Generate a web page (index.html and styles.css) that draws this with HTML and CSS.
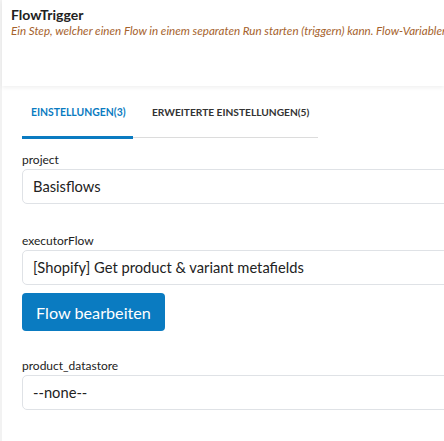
FILE: index.html
```html
<!DOCTYPE html>
<html lang="de">
<head>
<meta charset="utf-8">
<title>FlowTrigger</title>
<link rel="stylesheet" href="styles.css">
</head>
<body>
<div class="page">
  <header class="head">
    <h1 class="title">FlowTrigger</h1>
    <p class="desc">Ein Step, welcher einen Flow in einem separaten Run starten (triggern) kann. Flow-Variablen werden übergeben.</p>
  </header>
  <main class="content">
    <nav class="tabs">
      <div class="tab active">EINSTELLUNGEN(3)</div>
      <div class="tab">ERWEITERTE EINSTELLUNGEN(5)</div>
    </nav>
    <div class="field first">
      <label class="label">project</label>
      <div class="input">Basisflows</div>
    </div>
    <div class="field">
      <label class="label">executorFlow</label>
      <div class="input">[Shopify] Get product &amp; variant metafields</div>
      <button class="btn">Flow bearbeiten</button>
    </div>
    <div class="field last">
      <label class="label">product_datastore</label>
      <div class="input">--none--</div>
    </div>
  </main>
</div>
</body>
</html>
```
FILE: styles.css
```css
html, body {
  margin: 0;
  padding: 0;
}
body {
  background: #f2f2f2;
  font-family: "Lato", "Noto Sans", sans-serif;
  color: #222;
  overflow: hidden;
  height: 441px;
}
.page {
  margin-left: 2px;
  background: #fff;
  min-height: 441px;
}
.head {
  height: 86px;
  box-sizing: border-box;
  padding: 6px 9px 0 9px;
  box-shadow: 0 2px 4px rgba(0, 0, 0, 0.06);
  white-space: nowrap;
  overflow: hidden;
}
.title {
  margin: 0;
  font-size: 14px;
  font-weight: 700;
  line-height: 17px;
  color: #222;
}
.desc {
  margin: 1px 0 0 0;
  font-size: 11.6px;
  font-style: italic;
  line-height: 13px;
  color: #a5622c;
}
.content {
  padding: 0 0 0 20px;
  overflow: hidden;
}
.tabs {
  display: flex;
  width: 296px;
  margin-top: 16px;
  border-bottom: 1px solid #dcdcdc;
}
.tab {
  font-size: 10.4px;
  font-weight: 700;
  line-height: 12px;
  padding: 4px 0 18px 0;
  color: #333;
  white-space: nowrap;
}
.tab.active {
  width: 111px;
  box-sizing: border-box;
  padding-left: 9px;
  color: #0a7bc1;
  border-bottom: 3px solid #0a7bc1;
  margin-bottom: -2px;
}
.tab + .tab {
  padding-left: 19px;
  font-size: 10.2px;
}
.field {
  margin-top: 30px;
  width: 480px;
}
.field.first {
  margin-top: 15px;
}
.field.last {
  margin-top: 28px;
}
.label {
  display: block;
  font-size: 12px;
  line-height: 14px;
  color: #222;
  margin-bottom: 2px;
}
.input {
  height: 35px;
  box-sizing: border-box;
  border: 1px solid #dfe2e6;
  border-radius: 5px;
  padding: 0 10px;
  font-size: 14.7px;
  line-height: 33px;
  color: #222;
  white-space: nowrap;
}
.btn {
  display: block;
  margin-top: 8px;
  height: 38px;
  width: 143px;
  border: none;
  border-radius: 4px;
  background: #0a7bc1;
  color: #fff;
  font-family: inherit;
  font-size: 16.2px;
  padding: 0;
}
```
